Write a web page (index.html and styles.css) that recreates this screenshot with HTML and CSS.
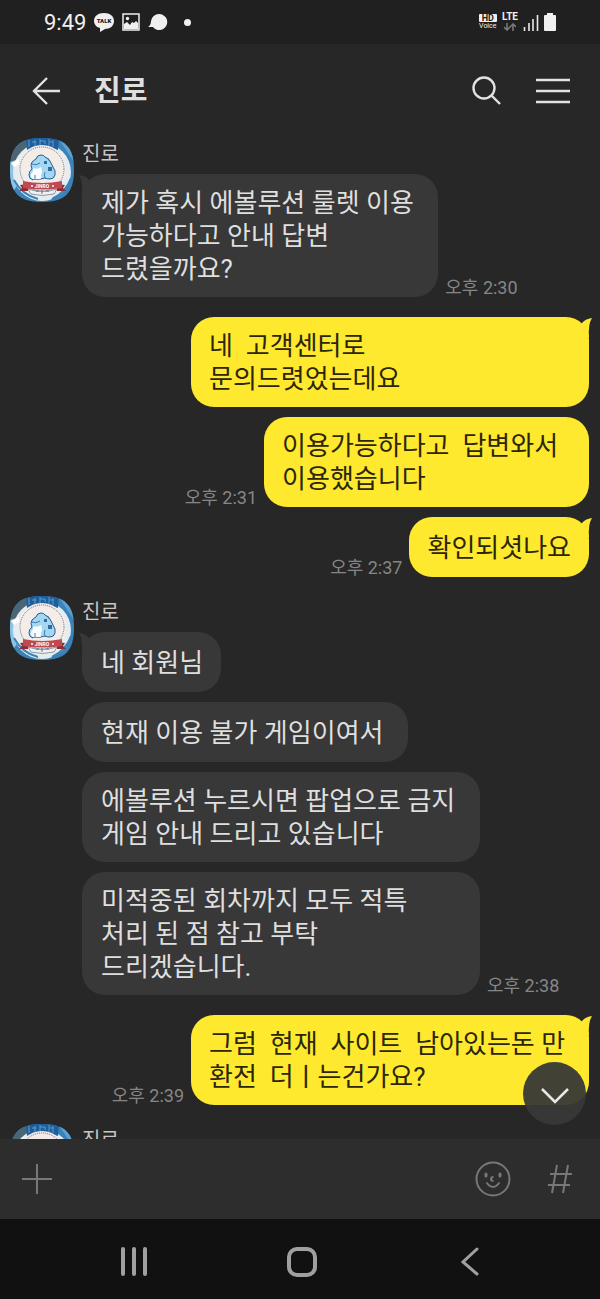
FILE: index.html
```html
<!DOCTYPE html>
<html lang="ko">
<head>
    <meta charset="UTF-8">
    <meta name="viewport" content="width=device-width, initial-scale=1.0">
    <title>진로</title>
    <link rel="stylesheet" href="styles.css">
</head>
<body>
    <!-- Profile picture, reused by every incoming group -->
    <svg class="sprite" aria-hidden="true">
        <defs>
            <clipPath id="squircle">
                <path d="M32 0C55 0 64 9 64 32S55 64 32 64 0 55 0 32 9 0 32 0z"/>
            </clipPath>
        </defs>
        <symbol id="avatar" viewBox="0 0 64 64">
            <g clip-path="url(#squircle)">
                <rect width="64" height="64" fill="#3a82b8"/>
                <path d="M0 0h17v18L0 30z" fill="#4b6574"/>
                <path d="M48 0h16v24z" fill="#5ba2cf"/>
                <path d="M0 24l9-3v24L4 52H0z" fill="#8cc4e6"/>
                <circle cx="32" cy="34" r="29" fill="#e6edf1"/>
                <path d="M4 42q8 15 24 19M61 40q-5 14-19 21" fill="none" stroke="#3a82b8" stroke-width="2"/>
                <path d="M16 0h33l-1 12q-16-6-31 0z" fill="#1d5e9e"/>
                <path d="M19 2v7M22 4h4M25 2v6M30 1v6M30 3h5v3M39 1v7M43 2v7M40 4h3" fill="none" stroke="#5f9dcb" stroke-width="1"/>
                <circle cx="32" cy="31" r="24" fill="#f3ece9"/>
                <circle cx="32" cy="31" r="22" fill="none" stroke="#5b7182" stroke-width="1" stroke-dasharray="1 1"/>
                <path d="M1 25l8-4v5l-5 3z" fill="#fff"/>
                <path d="M23 42q-4-1-4-5 0-4 3-6-2-4 0-7 2-2 4-3 1-4 5-4 3 0 4 2 5 2 6 6l2 4q3 4 2 8-1 4-5 4-3 0-5-1-5 2-12 1z" fill="#a6d7f2" stroke="#215f91" stroke-width="1"/>
                <path d="M23 41q-3-2-2-5 3-3 2-6 4 2 8-1 2 5 0 8 1 3-1 4z" fill="#f8fcff"/>
                <path d="M22 26q4 2 8-1M35 34q-2 4 1 7M25 37v4" fill="none" stroke="#3b7fb0" stroke-width="1"/>
                <path d="M34 23h3v3h-3zM38 29h4v4h-4zM36 19l3 2v2z" fill="#2c6da3"/>
                <path d="M18 51q14 5 29 0l-3 5q-12 3-23 0z" fill="#f1f1f1" stroke="#8a97a2" stroke-width="1"/>
                <path d="M32 52v4M26 53h3M36 53h3" stroke="#506f8a" stroke-width="1"/>
                <path d="M10 47l8-1v7H9l3-3zM55 47l-8-1v7h9l-3-3z" fill="#8f2d35"/>
                <path d="M13 43q19 4 39 0v7q-20 3-39 0z" fill="#c04950"/>
                <text x="32" y="50" class="avatar-label">JINRO</text>
                <circle cx="22" cy="48" r="1" fill="#fff"/>
                <circle cx="43" cy="48" r="1" fill="#fff"/>
            </g>
        </symbol>
    </svg>

    <div class="status-bar">
        <div class="status-left">
            <span class="clock">9:49</span>
            <svg width="20" height="20" viewBox="0 0 20 20" aria-hidden="true">
                <path d="M10 1c6 0 10 3 10 8s-4 8-9 8l-5 3v-4C2 15 0 12 0 9c0-5 4-8 10-8z" fill="#f0f0f0"/>
                <text x="10" y="11" class="talk-label">TALK</text>
            </svg>
            <svg width="18" height="18" viewBox="0 0 18 18" aria-hidden="true">
                <rect x="1" y="1" width="16" height="16" fill="none" stroke="#f0f0f0" stroke-width="1.5"/>
                <circle cx="5.5" cy="5.5" r="1.7" fill="#f0f0f0"/>
                <path d="M2 16v-5l3-2 3 3 2-3 2 1 2-2 2 2v6z" fill="#f0f0f0"/>
            </svg>
            <svg width="20" height="18" viewBox="0 0 20 18" aria-hidden="true">
                <path d="M11 1a8 8 0 1 1-6 13L0 14q3-2 3-6a8 8 0 0 1 8-7z" fill="#f0f0f0"/>
            </svg>
            <span class="dot"></span>
        </div>
        <div class="status-right">
            <span class="hd"><b>HD</b><span>Voice</span></span>
            <span class="lte">LTE
                <svg width="12" height="8" viewBox="0 0 12 8" aria-hidden="true">
                    <path d="M3 0v7M0 4l3 3 3-3M9 8V1M6 4l3-3 3 3" fill="none" stroke="#777" stroke-width="1.6"/>
                </svg>
            </span>
            <svg width="16" height="17" viewBox="0 0 16 17" aria-hidden="true">
                <path d="M1.500 13v4M6 9v8M10 5v12M14.500 1v16" stroke="#e8e8e8" stroke-width="1.6"/>
            </svg>
            <svg width="12" height="18" viewBox="0 0 12 18" aria-hidden="true">
                <path d="M3 0h6v2h2q1 0 1 1v14q0 1-1 1H1q-1 0-1-1V3q0-1 1-1h2z" fill="#f0f0f0"/>
            </svg>
        </div>
    </div>

    <header class="chat-header">
        <button class="icon-button" aria-label="뒤로">
            <svg width="28" height="28" viewBox="0 0 28 28"><path d="M15 1L2 14l13 13M2 14h26"/></svg>
        </button>
        <h1>진로</h1>
        <button class="icon-button" aria-label="검색">
            <svg width="30" height="30" viewBox="0 0 30 30"><circle cx="12" cy="12" r="10.500"/><path d="M19.500 19.500L28 28"/></svg>
        </button>
        <button class="icon-button" aria-label="메뉴">
            <svg width="34" height="26" viewBox="0 0 34 26"><path d="M0 2h34M0 13h34M0 24h34"/></svg>
        </button>
    </header>

    <main class="chat-area">
        <div class="chat">
            <section class="group incoming">
                <svg class="avatar" role="img" aria-label="진로"><use href="#avatar"/></svg>
                <div class="messages">
                    <div class="name">진로</div>
                    <div class="row">
                        <p class="bubble tail">제가 혹시 에볼루션 룰렛 이용 
가능하다고 안내 답변 
드렸을까요?</p>
                        <time>오후 2:30</time>
                    </div>
                </div>
            </section>

            <section class="group outgoing">
                <div class="row">
                    <p class="bubble tail wide">네  고객센터로 
문의드렷었는데요</p>
                </div>
                <div class="row">
                    <time>오후 2:31</time>
                    <p class="bubble">이용가능하다고  답변와서  
이용했습니다</p>
                </div>
                <div class="row">
                    <time>오후 2:37</time>
                    <p class="bubble tail">확인되셧나요</p>
                </div>
            </section>

            <section class="group incoming">
                <svg class="avatar" role="img" aria-label="진로"><use href="#avatar"/></svg>
                <div class="messages">
                    <div class="name">진로</div>
                    <div class="row"><p class="bubble tail">네 회원님</p></div>
                    <div class="row"><p class="bubble">현재 이용 불가 게임이여서 </p></div>
                    <div class="row">
                        <p class="bubble wide">에볼루션 누르시면 팝업으로 금지
게임 안내 드리고 있습니다</p>
                    </div>
                    <div class="row">
                        <p class="bubble wide">미적중된 회차까지 모두 적특
처리 된 점 참고 부탁
드리겠습니다.</p>
                        <time>오후 2:38</time>
                    </div>
                </div>
            </section>

            <section class="group outgoing">
                <div class="row">
                    <time>오후 2:39</time>
                    <p class="bubble tail wide">그럼  현재  사이트  남아있는돈 만
환전  더ㅣ는건가요?</p>
                </div>
            </section>

            <section class="group incoming">
                <svg class="avatar" role="img" aria-label="진로"><use href="#avatar"/></svg>
                <div class="messages">
                    <div class="name">진로</div>
                </div>
            </section>
        </div>
        <button class="scroll-down" aria-label="맨 아래로">
            <svg width="28" height="16" viewBox="0 0 28 16"><path d="M1 1l13 13L27 1"/></svg>
        </button>
    </main>

    <form class="input-bar">
        <button type="button" class="tool" aria-label="추가">
            <svg width="30" height="30" viewBox="0 0 30 30"><path d="M15 0v30M0 15h30"/></svg>
        </button>
        <input type="text" aria-label="메시지 입력">
        <button type="button" class="tool" aria-label="이모티콘">
            <svg width="36" height="36" viewBox="0 0 36 36">
                <circle cx="18" cy="18" r="16.500"/>
                <path d="M11 13v2M25 13v2" stroke-width="3" stroke-linecap="round"/>
                <path d="M18.500 16q-2.500 0-2.500 2t2.500 2M11.500 21.500q6.500 9 13 0"/>
            </svg>
        </button>
        <button type="button" class="tool" aria-label="샵검색">
            <svg width="26" height="30" viewBox="0 0 26 30"><path d="M10 1L5 29M21 1l-5 28M3 10h22M1 21h22"/></svg>
        </button>
    </form>

    <nav class="system-nav">
        <button aria-label="최근 앱">
            <svg width="28" height="30" viewBox="0 0 28 30"><path d="M3 2v25M14 2v25M25 2v25"/></svg>
        </button>
        <button aria-label="홈">
            <svg width="32" height="32" viewBox="0 0 32 32"><rect x="3" y="3" width="26" height="26" rx="8"/></svg>
        </button>
        <button aria-label="이전">
            <svg width="18" height="30" viewBox="0 0 18 30"><path d="M16 2L2 15l14 12"/></svg>
        </button>
    </nav>
</body>
</html>
```
FILE: styles.css
```css
* {
    box-sizing: border-box;
}

body {
    display: flex;
    flex-direction: column;
    height: 100vh;
    margin: 0;
    overflow: hidden;
    background-color: #272727;
    color: #dfdfdf;
    font-family: Roboto, "Noto Sans CJK KR", sans-serif;
}

button {
    display: flex;
    align-items: center;
    justify-content: center;
    padding: 0;
    border: none;
    background: none;
    cursor: pointer;
}

svg {
    display: block;
    flex: none;
}

.sprite {
    position: absolute;
    width: 0;
    height: 0;
}

/* Status bar */
.status-bar {
    display: flex;
    flex: none;
    align-items: center;
    justify-content: space-between;
    height: 44px;
    padding: 0 44px;
    background-color: #202020;
    color: #f0f0f0;
}

.status-left,
.status-right {
    display: flex;
    align-items: center;
    gap: 8px;
}

.status-right {
    gap: 5px;
}

.clock {
    font-size: 22px;
}

.talk-label {
    fill: #202020;
    font-size: 6px;
    font-weight: 900;
    text-anchor: middle;
}

.avatar-label {
    fill: #fff;
    font-size: 5px;
    font-weight: 700;
    text-anchor: middle;
}

.dot {
    width: 7px;
    height: 7px;
    margin-left: 8px;
    border-radius: 50%;
    background-color: #f0f0f0;
}

.hd,
.lte {
    display: flex;
    flex-direction: column;
    align-items: center;
    font-size: 7px;
    line-height: 8px;
}

.hd b {
    align-self: stretch;
    padding: 0 3px;
    border-radius: 1px;
    background-color: #f0f0f0;
    color: #202020;
    font-size: 9px;
    text-align: center;
}

.lte {
    gap: 2px;
    font-size: 10px;
    font-weight: 700;
}

/* Chat header */
.chat-header {
    display: flex;
    flex: none;
    align-items: center;
    height: 94px;
    padding: 0 30px 0 32px;
}

.chat-header h1 {
    flex: 1;
    margin: 0 0 0 34px;
    font-size: 29px;
    font-weight: 700;
    line-height: 40px;
}

.icon-button svg {
    fill: none;
    stroke: #e2e2e2;
    stroke-width: 2.4;
}

.icon-button:last-child {
    margin-left: 34px;
}

/* Messages */
.chat-area {
    position: relative;
    flex: 1;
    min-height: 0;
}

.chat {
    display: flex;
    flex-direction: column;
    height: 100%;
    padding: 0 11px 0 10px;
    overflow: hidden;
}

.group {
    display: flex;
    flex: none;
}

.incoming {
    gap: 8px;
    margin-bottom: 20px;
}

.outgoing {
    flex-direction: column;
    gap: 10px;
    margin-bottom: 19px;
}

.avatar {
    width: 64px;
    height: 64px;
}

.messages {
    display: flex;
    flex: 1;
    flex-direction: column;
    gap: 10px;
}

.name {
    margin-bottom: -7px;
    color: #c6c6c6;
    font-size: 20px;
    line-height: 33px;
}

.row {
    display: flex;
    align-items: flex-end;
    gap: 7px;
}

.outgoing .row {
    justify-content: flex-end;
}

.bubble {
    position: relative;
    display: grid;
    align-content: center;
    min-height: 60px;
    margin: 0;
    padding: 13px 18px 11px;
    border-radius: 23px;
    background-color: #383838;
    font-size: 26px;
    line-height: 33px;
    white-space: break-spaces;
    word-break: keep-all;
}

.incoming .bubble {
    padding-left: 19px;
}

.outgoing .bubble {
    background-color: #ffe92f;
    color: #2c2608;
}

.wide {
    width: 398px;
}

.tail::before {
    content: "";
    position: absolute;
    top: 1px;
    left: -4px;
    width: 20px;
    height: 20px;
    background-color: inherit;
    clip-path: path("M1 0Q8 1 11 5L12 12L4 20Q5 6 1 0Z");
}

.outgoing .tail::before {
    right: -4px;
    left: auto;
    clip-path: path("M19 0Q12 1 9 5L8 12L16 20Q15 6 19 0Z");
}

time {
    flex: none;
    color: #868686;
    font-size: 18px;
    line-height: 18px;
}

.scroll-down {
    position: absolute;
    right: 14px;
    bottom: 14px;
    width: 63px;
    height: 63px;
    border-radius: 50%;
    background-color: rgba(56, 56, 54, 0.95);
}

.scroll-down svg {
    margin-top: 4px;
    fill: none;
    stroke: #e8e8e8;
    stroke-width: 2.6;
}

/* Input bar */
.input-bar {
    display: flex;
    flex: none;
    align-items: center;
    gap: 20px;
    height: 80px;
    padding: 0 27px 0 22px;
    background-color: #2d2d2d;
}

.input-bar input {
    flex: 1;
    min-width: 0;
    height: 48px;
    border: none;
    outline: none;
    background: none;
    color: #dfdfdf;
    font: inherit;
    font-size: 26px;
}

.tool svg {
    fill: none;
    stroke: #77777c;
    stroke-width: 2;
}

.tool:last-child {
    margin-left: 16px;
}

/* System navigation */
.system-nav {
    display: grid;
    flex: none;
    grid-template-columns: repeat(3, 1fr);
    height: 80px;
    padding: 6px 46px 0 50px;
    background-color: #111;
}

.system-nav svg {
    fill: none;
    stroke: #a0a0a0;
    stroke-width: 4;
    stroke-linecap: round;
}

.system-nav button:last-child svg {
    stroke-width: 3;
}
```
